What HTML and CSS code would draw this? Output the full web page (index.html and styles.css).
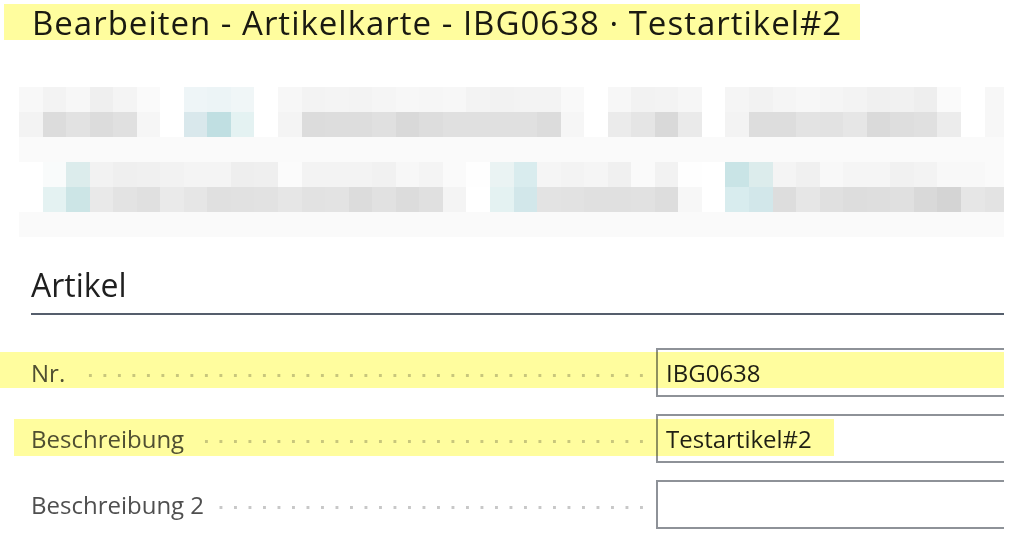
FILE: index.html
```html
<!DOCTYPE html>
<html lang="de">
<head>
<meta charset="utf-8">
<title>Bearbeiten - Artikelkarte</title>
<link rel="stylesheet" href="styles.css">
</head>
<body>
<div class="page">
  <h1 class="title">Bearbeiten - Artikelkarte - IBG0638 · Testartikel#2</h1>
  <div class="mosaic" aria-hidden="true">
    <div class="mrow r1"></div>
    <div class="mrow r2"></div>
    <div class="mrow r3"></div>
    <div class="mrow r4"></div>
    <div class="mrow r5"></div>
    <div class="mrow r6"></div>
  </div>
  <section class="card">
    <h2 class="section-title">Artikel</h2>
    <div class="fields">
      <div class="field">
        <span class="label">Nr.</span>
        <span class="leader"></span>
        <div class="input">IBG0638</div>
      </div>
      <div class="field">
        <span class="label">Beschreibung</span>
        <span class="leader"></span>
        <div class="input">Testartikel#2</div>
      </div>
      <div class="field">
        <span class="label">Beschreibung 2</span>
        <span class="leader"></span>
        <div class="input"></div>
      </div>
    </div>
  </section>
  <div class="marker m-title"></div>
  <div class="marker m-nr"></div>
  <div class="marker m-desc"></div>
</div>
</body>
</html>
```
FILE: styles.css
```css
html, body {
  margin: 0;
  padding: 0;
  background: #ffffff;
}
body {
  font-family: "Open Sans", "Noto Sans", "Liberation Sans", sans-serif;
  color: #212121;
}
.page {
  position: relative;
  width: 1004px;
  height: 540px;
  overflow: hidden;
}
.title {
  margin: 0;
  padding-left: 32px;
  font-size: 33px;
  font-weight: 400;
  letter-spacing: 1px;
  line-height: 45px;
  color: #1a1a1a;
  white-space: nowrap;
}
.mosaic {
  margin: 42.3px 0 0 19.3px;
  width: 989.1px;
  display: flex;
  flex-direction: column;
}
.mrow {
  height: 25px;
}
.r3, .r6 {
  background: #fafafa;
}
.r1 {
  background: linear-gradient(to right,
    #f8f8f8 0 23.55px, #f3f3f3 0 47.1px, #f7f7f7 0 70.65px, #efefef 0 94.2px, #f4f4f4 0 117.75px,
    #fafafa 0 141.3px, #ffffff 0 164.85px, #eef5f7 0 188.4px, #ecf4f6 0 211.95px, #f0f6f7 0 235.5px,
    #ffffff 0 259.05px, #f7f7f7 0 282.6px, #f3f3f3 0 306.15px, #f4f4f4 0 329.7px, #f3f3f3 0 353.25px,
    #f5f5f5 0 376.8px, #f7f7f7 0 400.35px, #f6f6f6 0 423.9px, #f7f7f7 0 447.45px, #f3f3f3 0 471px,
    #f2f2f2 0 494.55px, #f3f3f3 0 518.1px, #f3f3f3 0 541.65px, #f9f9f9 0 565.2px, #ffffff 0 588.75px,
    #f7f7f7 0 612.3px, #f2f2f2 0 635.85px, #f3f3f3 0 659.4px, #f6f6f6 0 682.95px, #ffffff 0 706.5px,
    #f5f5f5 0 730.05px, #f2f2f2 0 753.6px, #f5f5f5 0 777.15px, #f7f7f7 0 800.7px, #f5f5f5 0 824.25px,
    #f3f3f3 0 847.8px, #f0f0f0 0 871.35px, #f1f1f1 0 894.9px, #eeeeee 0 918.45px, #fafafa 0 942px,
    #ffffff 0 965.55px, #f7f7f7 0 989.1px);
}
.r2 {
  background: linear-gradient(to right,
    #f3f3f3 0 23.55px, #dcdcdc 0 47.1px, #e2e2e2 0 70.65px, #dcdcdc 0 94.2px, #e0e0e0 0 117.75px,
    #f6f6f6 0 141.3px, #ffffff 0 164.85px, #d9e8ec 0 188.4px, #c0dfe2 0 211.95px, #e4f2f2 0 235.5px,
    #ffffff 0 259.05px, #f4f4f4 0 282.6px, #dcdcdc 0 306.15px, #dddddd 0 329.7px, #dddddd 0 353.25px,
    #e0e0e0 0 376.8px, #d9d9d9 0 400.35px, #dddddd 0 423.9px, #e0e0e0 0 447.45px, #e0e0e0 0 471px,
    #e0e0e0 0 494.55px, #e0e0e0 0 518.1px, #dcdcdc 0 541.65px, #f6f6f6 0 565.2px, #ffffff 0 588.75px,
    #ebebeb 0 612.3px, #e5e5e5 0 635.85px, #d9d9d9 0 659.4px, #eaeaea 0 682.95px, #ffffff 0 706.5px,
    #f3f3f3 0 730.05px, #dddddd 0 753.6px, #dddddd 0 777.15px, #e3e3e3 0 800.7px, #e2e2e2 0 824.25px,
    #e6e6e6 0 847.8px, #dadada 0 871.35px, #dedede 0 894.9px, #e0e0e0 0 918.45px, #ececec 0 942px,
    #ffffff 0 965.55px, #f7f7f7 0 989.1px);
}
.r4 {
  background: linear-gradient(to right,
    #ffffff 0 23.55px, #f9fbfb 0 47.1px, #dcecec 0 70.65px, #f2f2f2 0 94.2px, #efefef 0 117.75px,
    #f0f0f0 0 141.3px, #f2f2f2 0 164.85px, #f4f4f4 0 188.4px, #f4f4f4 0 211.95px, #eeeeee 0 235.5px,
    #efefef 0 259.05px, #fbfbfb 0 282.6px, #f3f3f3 0 306.15px, #f3f3f3 0 329.7px, #f3f3f3 0 353.25px,
    #f1f1f1 0 376.8px, #f7f7f7 0 400.35px, #f4f4f4 0 423.9px, #fafafa 0 447.45px, #fefefe 0 471px,
    #eaf3f3 0 494.55px, #d9ecee 0 518.1px, #f5f5f5 0 541.65px, #f3f3f3 0 565.2px, #f5f5f5 0 588.75px,
    #f0f0f0 0 612.3px, #fafafa 0 635.85px, #f2f2f2 0 659.4px, #fefefe 0 682.95px, #ffffff 0 706.5px,
    #c9e4e6 0 730.05px, #dcecec 0 753.6px, #f4f4f4 0 777.15px, #f0f0f0 0 800.7px, #f8f8f8 0 824.25px,
    #f5f5f5 0 847.8px, #f5f5f5 0 871.35px, #f1f1f1 0 894.9px, #f3f3f3 0 918.45px, #f8f8f8 0 942px,
    #f8f8f8 0 965.55px, #fafafa 0 989.1px);
}
.r5 {
  background: linear-gradient(to right,
    #ffffff 0 23.55px, #e4f2f2 0 47.1px, #cce5e6 0 70.65px, #e9e9e9 0 94.2px, #e3e3e3 0 117.75px,
    #e0e0e0 0 141.3px, #eaeaea 0 164.85px, #e6e6e6 0 188.4px, #e0e0e0 0 211.95px, #e1e1e1 0 235.5px,
    #e2e2e2 0 259.05px, #e6e6e6 0 282.6px, #e2e2e2 0 306.15px, #e3e3e3 0 329.7px, #dcdcdc 0 353.25px,
    #e1e1e1 0 376.8px, #dcdcdc 0 400.35px, #e0e0e0 0 423.9px, #f4f4f4 0 447.45px, #ffffff 0 471px,
    #e4f2f2 0 494.55px, #d2e7ea 0 518.1px, #e3e3e3 0 541.65px, #e2e2e2 0 565.2px, #e0e0e0 0 588.75px,
    #e0e0e0 0 612.3px, #e1e1e1 0 635.85px, #dddddd 0 659.4px, #f7f7f7 0 682.95px, #ffffff 0 706.5px,
    #d8ecee 0 730.05px, #d2e7ea 0 753.6px, #dddddd 0 777.15px, #e6e6e6 0 800.7px, #e0e0e0 0 824.25px,
    #dddddd 0 847.8px, #dedede 0 871.35px, #e0e0e0 0 894.9px, #d9d9d9 0 918.45px, #d4d4d4 0 942px,
    #e6e6e6 0 965.55px, #e3e3e3 0 989.1px);
}
.card {
  margin: 28px 0 0 31px;
}
.section-title {
  margin: 0;
  font-size: 32px;
  font-weight: 400;
  line-height: 40px;
  color: #1f1f1f;
  padding-bottom: 8px;
  border-bottom: 2px solid #555e6c;
}
.fields {
  margin-top: 33px;
  display: flex;
  flex-direction: column;
  gap: 17px;
}
.field {
  display: flex;
  align-items: stretch;
  height: 49px;
}
.label {
  font-size: 24px;
  line-height: 49px;
  color: #4f4f4f;
  white-space: nowrap;
}
.leader {
  flex: 1;
  margin: 0 13px 0 14px;
  background: linear-gradient(to right, transparent 11.5px, #c8c8c8 11.5px) right 0 bottom 20px / 14.5px 3px repeat-x;
}
.input {
  flex: 0 0 400px;
  box-sizing: border-box;
  border: 2px solid #8e9298;
  padding-left: 8px;
  font-size: 24px;
  line-height: 45px;
  color: #1f1f1f;
  margin-right: -52px;
}
.marker {
  position: absolute;
  background: #fffd9e;
  mix-blend-mode: multiply;
  pointer-events: none;
}
.m-title {
  left: 4px;
  top: 4px;
  width: 856px;
  height: 36px;
}
.m-nr {
  left: 0;
  top: 352px;
  width: 1004px;
  height: 36px;
}
.m-desc {
  left: 14px;
  top: 419px;
  width: 820px;
  height: 37px;
}
```
